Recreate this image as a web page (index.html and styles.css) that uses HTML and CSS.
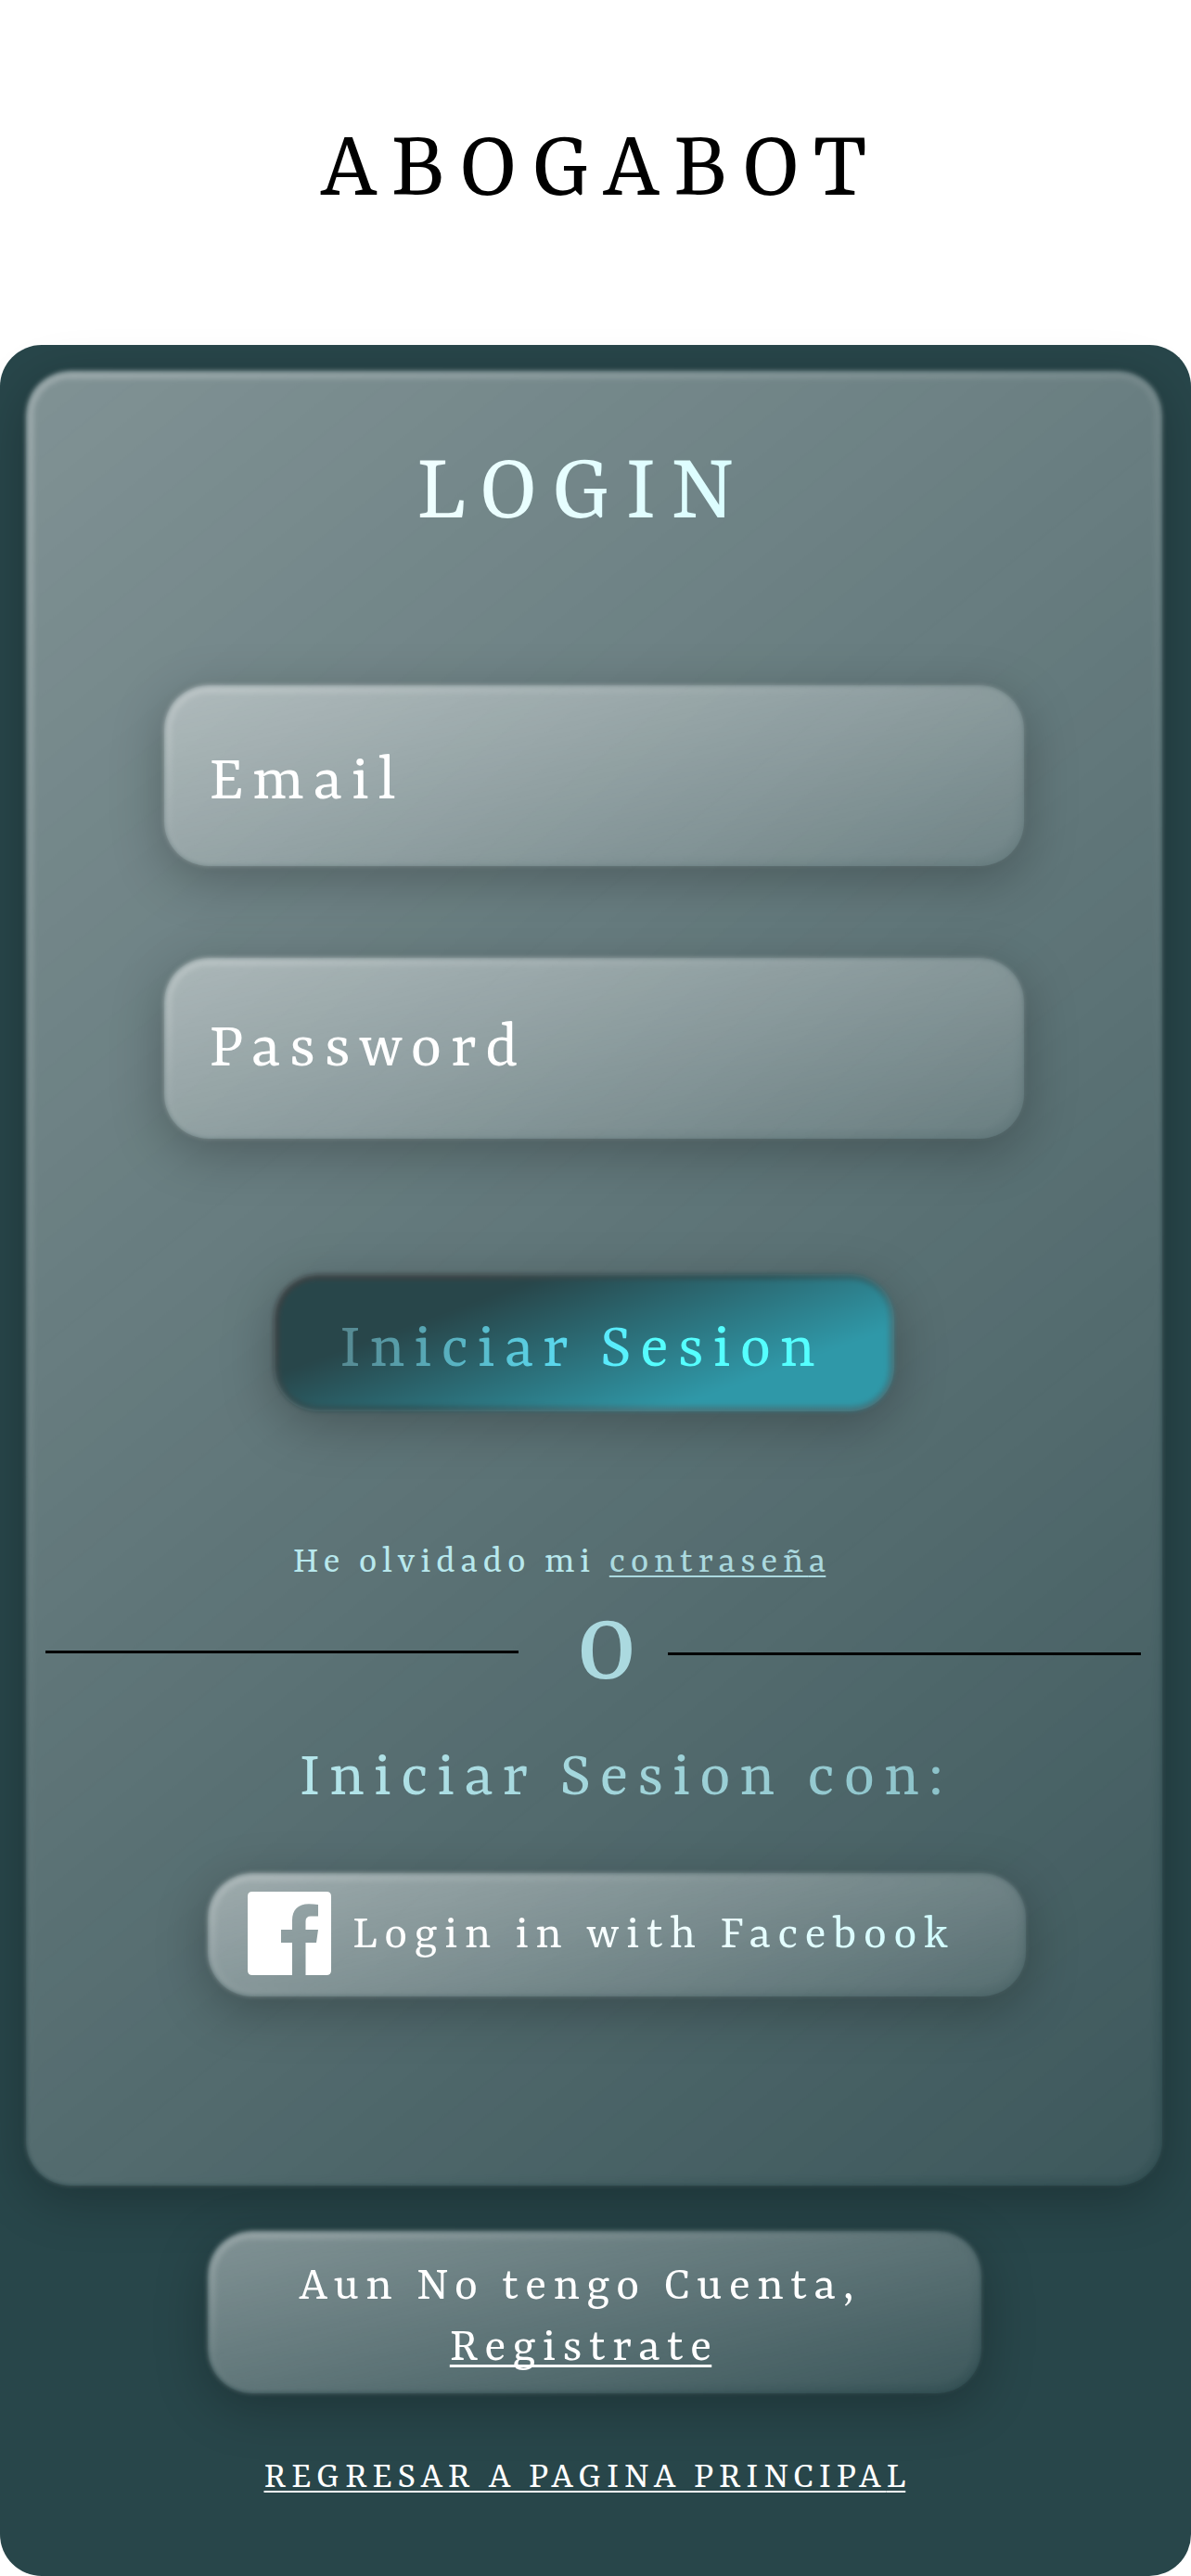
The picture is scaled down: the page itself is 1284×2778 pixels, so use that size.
FILE: index.html
```
<!DOCTYPE html>
<html lang="es">
<head>
<meta charset="utf-8">
<title>Abogabot - Login</title>
<link rel="stylesheet" href="styles.css">
</head>
<body>
<header class="header"><h1 class="brand">ABOGABOT</h1></header>
<main class="shell">
  <section class="glass card">
    <span class="surface"></span>
    <h2 class="title">LOGIN</h2>
    <form class="form">
      <label class="glass field field-email"><span class="surface"></span>Email</label>
      <label class="glass field field-password"><span class="surface"></span>Password</label>
      <button class="glass submit" type="button"><span class="surface"></span><span class="submit-text">Iniciar Sesion</span></button>
    </form>
    <p class="forgot">He olvidado mi <a class="link">contraseñ<span class="last">a</span></a></p>
    <div class="divider"><span class="rule rule-left"></span><span class="or">O</span><span class="rule rule-right"></span></div>
    <p class="with">Iniciar Sesion con:</p>
    <button class="glass facebook" type="button">
      <span class="surface"></span>
      <svg class="fb-icon" viewBox="0 0 90 90" aria-hidden="true"><path fill="#fff" fill-rule="evenodd" d="M5 0H85Q90 0 90 5V85Q90 90 85 90H62.5V55H74L76 41H62.5V32Q62.5 26.5 68 26.5H76V14Q71 13.3 66 13.3C54 13.3 48 20 48 31V41H36V55H48V90H5Q0 90 0 85V5Q0 0 5 0Z"/></svg>
      <span class="facebook-text">Login in with Facebook</span>
    </button>
  </section>
  <section class="glass register">
    <span class="surface"></span>
    <p class="register-line">Aun No tengo Cuenta,</p>
    <p class="register-line register-action"><a class="link">Registrat<span class="last">e</span></a></p>
  </section>
  <p class="back"><a class="link">REGRESAR A PAGINA PRINCIPA<span class="last">L</span></a></p>
</main>
</body>
</html>
```
FILE: styles.css
```
* { box-sizing: border-box; }
body {
  margin: 0;
  width: 1284px;
  background: #fff;
  color: #fff;
  font-family: Yrsa, Rasa, "Noto Serif", "Liberation Serif", serif;
}
h1, h2, p { margin: 0; font-weight: 400; white-space: nowrap; }
button { border: 0; background: none; font: inherit; color: inherit; text-align: left; }
.brand, .title, .field, .submit-text, .forgot, .with, .facebook-text, .register-line, .back { letter-spacing: .1345em; }

.header { height: 372px; padding: 135.4px 0 0 345.5px; }
.brand { color: #000; font-size: 108px; line-height: 100px; }

.shell {
  height: 2406px;
  padding-top: 28px;
  border-radius: 45px;
  background: #28464a;
}

/* Frosted panel: a soft-edged fill plus a lighter rim that fades out */
.glass {
  position: relative;
  isolation: isolate;
  display: block;
  border-radius: 48px;
  box-shadow: 0 14px 56px rgba(0, 0, 0, .27);
  --edge: 9px;
  --fill: linear-gradient(167deg, rgba(255, 255, 255, .41), rgba(255, 255, 255, .1));
  --rim: linear-gradient(167deg, rgba(255, 255, 255, .52), rgba(255, 255, 255, .25) 50%, rgba(255, 255, 255, .06));
}
.surface { position: absolute; z-index: -1; inset: 0; filter: blur(2.5px); }
.surface::before {
  content: "";
  position: absolute;
  inset: var(--edge);
  border-radius: 39px;
  background: var(--fill);
}
.surface::after {
  content: "";
  position: absolute;
  inset: 0;
  padding: var(--edge);
  border-radius: 48px;
  background: var(--rim);
  mask: linear-gradient(#000 0 0) content-box exclude, linear-gradient(#000 0 0);
}

.card {
  width: 1225px;
  height: 1957px;
  margin-left: 28px;
  padding-top: 83px;
  --fill: linear-gradient(141deg, rgba(255, 255, 255, .41), rgba(255, 255, 255, .1));
  --rim: linear-gradient(141deg, rgba(255, 255, 255, .53), rgba(255, 255, 255, .27) 50%, rgba(255, 255, 255, .07));
}
.title {
  width: max-content;
  margin-left: 420.4px;
  font-size: 108px;
  line-height: 100px;
  color: transparent;
  background: linear-gradient(90deg, #f0ffff, #dafdff) text;
}
.form { margin-top: 156px; }
.field {
  width: 927px;
  height: 195px;
  margin-left: 149px;
  padding-left: 48.5px;
  font-size: 72px;
  line-height: 80px;
}
.field-email { padding-top: 65.6px; }
.field-password { margin-top: 99px; padding-top: 59.6px; }
.submit {
  display: flex;
  align-items: flex-start;
  width: 669px;
  height: 148px;
  margin: 146px 0 0 267px;
  padding: 42.6px 0 0 71.3px;
  font-size: 72px;
  line-height: 80px;
  --edge: 6px;
  --fill: linear-gradient(160deg, #28464a 27%, #2f98a8 78%);
  --rim: linear-gradient(160deg, #3a4244 20%, #2c5459 50%, #2f8593aa 75%);
}
.submit-text {
  white-space: nowrap;
  color: transparent;
  background: linear-gradient(100deg, #56868e, #5be4fb 52%, #55ffff 65%) text;
}
.forgot {
  margin: 141.4px 0 0 287.7px;
  font-size: 42px;
  line-height: 44px;
  color: #b8e8ed;
}
.forgot .link { color: #abd9df; }
.link {
  text-decoration: underline 2px;
  text-underline-offset: 4px;
  text-decoration-skip-ink: none;
}
.last { letter-spacing: 0; }
.divider { display: flex; align-items: flex-start; margin-top: 20.6px; height: 100px; padding-left: 21px; }
.rule { width: 510px; height: 3px; background: #000; }
.rule-left { margin-top: 52.5px; }
.rule-right { margin-top: 54px; }
.or {
  width: 161px;
  margin-top: 7.4px;
  padding-left: 63.5px;
  font-size: 108px;
  font-weight: 500;
  line-height: 100px;
  color: #abd9df;
}
.with {
  width: max-content;
  margin: 50.6px 0 0 294.8px;
  font-size: 72px;
  line-height: 80px;
  color: transparent;
  background: linear-gradient(95deg, #b5e6eb, #8cc2c9) text;
}
.facebook {
  display: flex;
  align-items: flex-start;
  width: 882px;
  height: 133px;
  margin: 61.4px 0 0 196px;
  padding: 20px 0 0 43px;
}
.fb-icon { flex: none; width: 90px; height: 90px; }
.facebook-text {
  margin: 17.7px 0 0 22.9px;
  font-size: 54px;
  line-height: 60px;
  white-space: nowrap;
  color: transparent;
  background: linear-gradient(95deg, #fff 30%, #d0fcff) text;
}
.register { width: 834px; height: 175px; margin: 49px 0 0 224px; padding-top: 28.3px; }
.register-line { padding-left: 98.6px; font-size: 54px; line-height: 66px; }
.register-action { padding-left: 260.8px; }
.register-action .link { text-decoration-thickness: 2.5px; text-underline-offset: 5px; }
.back { margin: 69.4px 0 0 284.5px; font-size: 42px; line-height: 44px; }
```
